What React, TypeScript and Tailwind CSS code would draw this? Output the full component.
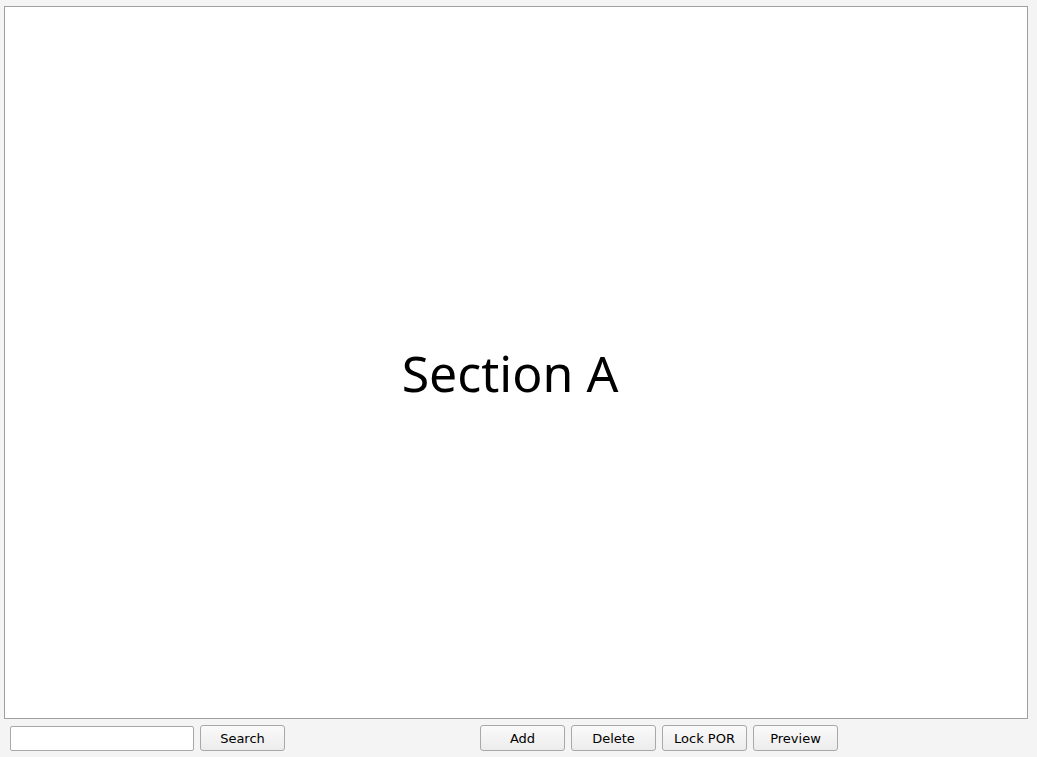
import React from "react";

function Btn({ label }: { label: string }) {
  return (
    <button className="h-[26px] w-[85px] rounded-[3px] border border-[#a8a8a8] bg-gradient-to-b from-[#fafafa] to-[#ececec] text-[13px] text-black font-['DejaVu_Sans',sans-serif] leading-none">
      {label}
    </button>
  );
}

export default function App() {
  return (
    <div className="w-[1037px] h-[757px] bg-[#f4f4f4] flex flex-col pt-[6px] pl-[4px] pr-[9px] font-['DejaVu_Sans',sans-serif]">
      {/* Main panel */}
      <div className="h-[713px] border border-[#a0a0a0] bg-white flex items-center justify-center">
        <span className="text-[50px] text-black font-['Noto_Sans',sans-serif] mt-[22px] -ml-[12px]">Section A</span>
      </div>

      {/* Bottom toolbar */}
      <div className="flex items-center mt-[6px] pl-[6px] h-[26px]">
        <input className="h-[25px] w-[184px] border border-[#a8a8a8] rounded-[2px] bg-white outline-none" />
        <div className="ml-[6px]">
          <Btn label="Search" />
        </div>
        <div className="ml-[195px] flex gap-[6px]">
          <Btn label="Add" />
          <Btn label="Delete" />
          <Btn label="Lock POR" />
          <Btn label="Preview" />
        </div>
      </div>
    </div>
  );
}
